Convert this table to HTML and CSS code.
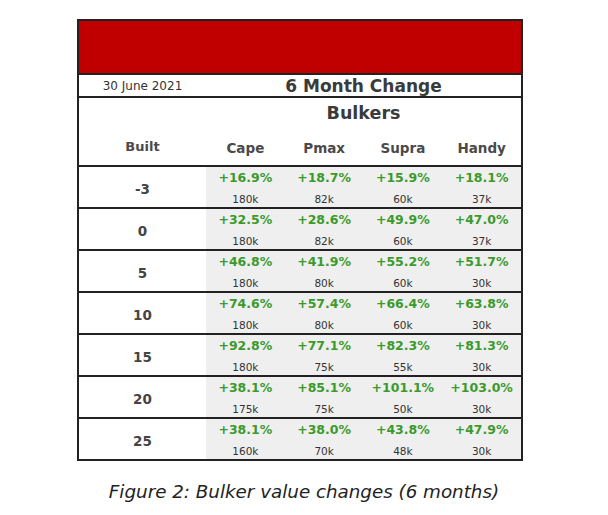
FILE: index.html
```html
<!DOCTYPE html>
<html>
<head>
<meta charset="utf-8">
<link rel="stylesheet" href="styles.css">
</head>
<body>
<div class="page">
  <div class="frame">
    <div class="banner"></div>
    <div class="daterow">
      <div class="date">30 June 2021</div>
      <div class="title">6 Month Change</div>
    </div>
    <div class="head">
      <div class="sub">Bulkers</div>
      <div class="cols">
        <div class="colh built-h">Built</div>
        <div class="colh">Cape</div>
        <div class="colh">Pmax</div>
        <div class="colh">Supra</div>
        <div class="colh">Handy</div>
      </div>
    </div>
    <div class="row">
      <div class="age">-3</div>
      <div class="cell"><span class="pct">+16.9%</span><span class="val">180k</span></div>
      <div class="cell"><span class="pct">+18.7%</span><span class="val">82k</span></div>
      <div class="cell"><span class="pct">+15.9%</span><span class="val">60k</span></div>
      <div class="cell"><span class="pct">+18.1%</span><span class="val">37k</span></div>
    </div>
    <div class="row">
      <div class="age">0</div>
      <div class="cell"><span class="pct">+32.5%</span><span class="val">180k</span></div>
      <div class="cell"><span class="pct">+28.6%</span><span class="val">82k</span></div>
      <div class="cell"><span class="pct">+49.9%</span><span class="val">60k</span></div>
      <div class="cell"><span class="pct">+47.0%</span><span class="val">37k</span></div>
    </div>
    <div class="row">
      <div class="age">5</div>
      <div class="cell"><span class="pct">+46.8%</span><span class="val">180k</span></div>
      <div class="cell"><span class="pct">+41.9%</span><span class="val">80k</span></div>
      <div class="cell"><span class="pct">+55.2%</span><span class="val">60k</span></div>
      <div class="cell"><span class="pct">+51.7%</span><span class="val">30k</span></div>
    </div>
    <div class="row">
      <div class="age">10</div>
      <div class="cell"><span class="pct">+74.6%</span><span class="val">180k</span></div>
      <div class="cell"><span class="pct">+57.4%</span><span class="val">80k</span></div>
      <div class="cell"><span class="pct">+66.4%</span><span class="val">60k</span></div>
      <div class="cell"><span class="pct">+63.8%</span><span class="val">30k</span></div>
    </div>
    <div class="row">
      <div class="age">15</div>
      <div class="cell"><span class="pct">+92.8%</span><span class="val">180k</span></div>
      <div class="cell"><span class="pct">+77.1%</span><span class="val">75k</span></div>
      <div class="cell"><span class="pct">+82.3%</span><span class="val">55k</span></div>
      <div class="cell"><span class="pct">+81.3%</span><span class="val">30k</span></div>
    </div>
    <div class="row">
      <div class="age">20</div>
      <div class="cell"><span class="pct">+38.1%</span><span class="val">175k</span></div>
      <div class="cell"><span class="pct">+85.1%</span><span class="val">75k</span></div>
      <div class="cell"><span class="pct">+101.1%</span><span class="val">50k</span></div>
      <div class="cell"><span class="pct">+103.0%</span><span class="val">30k</span></div>
    </div>
    <div class="row">
      <div class="age">25</div>
      <div class="cell"><span class="pct">+38.1%</span><span class="val">160k</span></div>
      <div class="cell"><span class="pct">+38.0%</span><span class="val">70k</span></div>
      <div class="cell"><span class="pct">+43.8%</span><span class="val">48k</span></div>
      <div class="cell"><span class="pct">+47.9%</span><span class="val">30k</span></div>
    </div>
  </div>
  <div class="caption">Figure 2: Bulker value changes (6 months)</div>
</div>
</body>
</html>
```

FILE: styles.css
```css
html, body {
  margin: 0;
  padding: 0;
  background: #ffffff;
}
body {
  font-family: "DejaVu Sans", Verdana, sans-serif;
  color: #333;
}
.page {
  padding-top: 19px;
  width: 608px;
}
.frame {
  margin-left: 77px;
  width: 442px;
  border: 2px solid #222;
}
.banner {
  height: 52px;
  background: #c00000;
  border-bottom: 2px solid #222;
}
.daterow {
  height: 21px;
  display: grid;
  grid-template-columns: 127px 1fr;
  align-items: center;
  border-bottom: 2px solid #222;
}
.date {
  text-align: center;
  font-size: 12px;
  color: #333;
  line-height: 21px;
}
.title {
  text-align: center;
  font-size: 17px;
  font-weight: bold;
  color: #3a3a3a;
  line-height: 21px;
  padding-top: 1px;
}
.head {
  height: 67px;
  display: flex;
  flex-direction: column;
}
.sub {
  margin-left: 127px;
  text-align: center;
  font-size: 17.5px;
  font-weight: bold;
  color: #3a3a3a;
  line-height: 24px;
  padding-top: 3px;
}
.cols {
  display: grid;
  grid-template-columns: 127px repeat(4, 1fr);
  margin-top: 13px;
}
.colh {
  text-align: center;
  font-size: 13.5px;
  font-weight: bold;
  color: #4a4a4a;
  line-height: 20px;
}
.built-h {
  font-size: 13px;
  margin-top: -1px;
}
.row {
  display: grid;
  grid-template-columns: 127px repeat(4, 1fr);
  height: 40px;
  border-top: 2px solid #222;
}
.age {
  display: flex;
  align-items: center;
  justify-content: center;
  font-size: 13.5px;
  font-weight: bold;
  color: #444;
  padding-top: 3px;
}
.cell {
  background: #efefef;
  display: flex;
  flex-direction: column;
  align-items: center;
}
.pct {
  padding-top: 2px;
  line-height: 18px;
  font-size: 12.5px;
  font-weight: bold;
  color: #3b9a2c;
}
.val {
  margin-top: 5px;
  line-height: 14px;
  font-size: 10.5px;
  color: #333;
}
.caption {
  margin-top: 20px;
  text-align: center;
  font-style: italic;
  font-size: 18.3px;
  line-height: 22px;
  color: #222;
}
```
